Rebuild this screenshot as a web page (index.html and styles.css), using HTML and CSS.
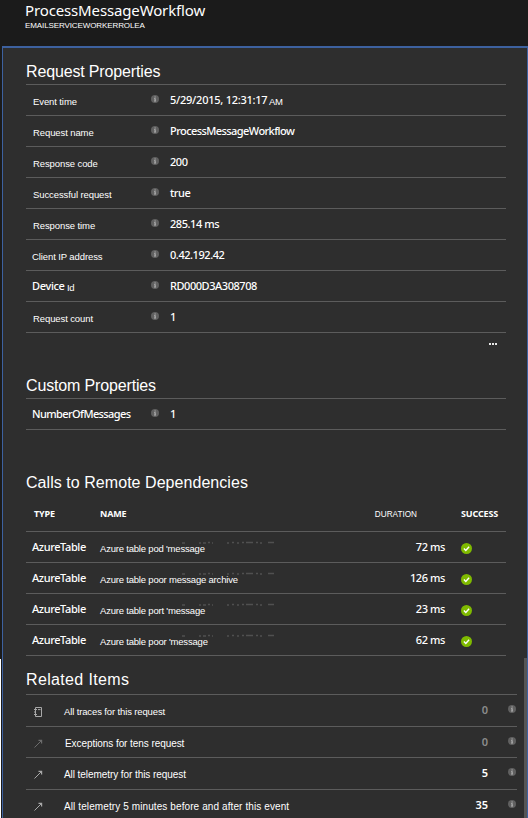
FILE: index.html
```html
<!DOCTYPE html>
<html lang="en">
<head>
<meta charset="utf-8">
<title>ProcessMessageWorkflow</title>
<link rel="stylesheet" href="styles.css">
</head>
<body>
<svg class="defs" width="0" height="0">
  <symbol id="info" viewBox="0 0 8 8"><circle cx="4" cy="4" r="4" fill="#606060"/><path d="M3.500 1.400h1.200v1.100H3.500zM3 3.300h1.700v2.500h.4v.8H3v-.8h.5V4H3z" fill="#b4b4b4"/></symbol>
  <symbol id="ok" viewBox="0 0 11 11"><circle cx="5.5" cy="5.5" r="5.5" fill="#7fba00"/><path d="M2.9 5.600l1.900 1.900 3.300-3.800" fill="none" stroke="#fff" stroke-width="1.4"/></symbol>
  <symbol id="arrow" viewBox="0 0 9 9"><path d="M.5 8.500L7 2" fill="none" stroke="currentColor"/><path d="M4.500.8h3.700v3.700H7V2H4.500z" fill="currentColor"/></symbol>
  <symbol id="book" viewBox="0 0 9 10"><path d="M1.500.5h6v9h-6zM0 2.500h3M0 5h2M0 7.500h3M4 2.600h2.500" fill="none" stroke="currentColor"/></symbol>
  <symbol id="smudge" viewBox="0 0 96 3"><path d="M2 2h3M19 2h2M23 2h3M28 1.500h2M32 2h1M47 2h2M52 1.500h2M57 2h2M62 1.500h2M66 1.500h7M76 1.500h2M80 2h2M88 1.500h6" stroke="#505050" stroke-width="1.500"/></symbol>
</svg>
<header class="header">
  <h1 class="title">ProcessMessageWorkflow</h1>
  <div class="subtitle">EMAILSERVICEWORKERROLEA</div>
</header>
<div class="body">
<div class="edge"></div>
<main class="blade">
  <section class="section">
    <h2 class="heading h-request">Request Properties</h2>
    <div class="row"><span class="label">Event time</span><svg class="info"><use href="#info"/></svg><span class="value date">5/29/2015, 12:31:17 <small class="am">AM</small></span></div>
    <div class="row"><span class="label">Request name</span><svg class="info"><use href="#info"/></svg><span class="value workflow">ProcessMessageWorkflow</span></div>
    <div class="row"><span class="label">Response code</span><svg class="info"><use href="#info"/></svg><span class="value">200</span></div>
    <div class="row"><span class="label">Successful request</span><svg class="info"><use href="#info"/></svg><span class="value">true</span></div>
    <div class="row"><span class="label">Response time</span><svg class="info"><use href="#info"/></svg><span class="value">285.14 ms</span></div>
    <div class="row"><span class="label ip">Client IP address</span><svg class="info"><use href="#info"/></svg><span class="value">0.42.192.42</span></div>
    <div class="row"><span class="label strong">Device <small class="id">Id</small></span><svg class="info"><use href="#info"/></svg><span class="value">RD000D3A308708</span></div>
    <div class="row"><span class="label">Request count</span><svg class="info"><use href="#info"/></svg><span class="value">1</span></div>
    <div class="more"><i></i><i></i><i></i></div>
  </section>
  <section class="section custom">
    <h2 class="heading h-custom">Custom Properties</h2>
    <div class="row"><span class="label strong messages">NumberOfMessages</span><svg class="info"><use href="#info"/></svg><span class="value">1</span></div>
  </section>
  <section class="section calls">
    <h2 class="heading h-calls">Calls to Remote Dependencies</h2>
    <div class="dep dep-head"><span class="type">TYPE</span><span class="name">NAME</span><span class="duration">DURATION</span><span class="success">SUCCESS</span></div>
    <div class="dep"><span class="type">AzureTable</span><span class="name">Azure table pod 'message<svg class="smudge"><use href="#smudge"/></svg></span><span class="duration">72 ms</span><svg class="ok"><use href="#ok"/></svg></div>
    <div class="dep"><span class="type">AzureTable</span><span class="name archive">Azure table poor message archive<svg class="smudge"><use href="#smudge"/></svg></span><span class="duration">126 ms</span><svg class="ok"><use href="#ok"/></svg></div>
    <div class="dep"><span class="type">AzureTable</span><span class="name">Azure table port 'message<svg class="smudge"><use href="#smudge"/></svg></span><span class="duration">23 ms</span><svg class="ok"><use href="#ok"/></svg></div>
    <div class="dep"><span class="type">AzureTable</span><span class="name">Azure table poor 'message<svg class="smudge"><use href="#smudge"/></svg></span><span class="duration">62 ms</span><svg class="ok"><use href="#ok"/></svg></div>
  </section>
  <section class="related">
    <h2 class="heading h-related">Related Items</h2>
    <div class="item"><svg class="glyph book"><use href="#book"/></svg><span class="text traces">All traces for this request</span><span class="count none">0</span><svg class="info"><use href="#info"/></svg></div>
    <div class="item"><svg class="glyph dim"><use href="#arrow"/></svg><span class="text exceptions">Exceptions for tens request</span><span class="count none">0</span><svg class="info"><use href="#info"/></svg></div>
    <div class="item"><svg class="glyph"><use href="#arrow"/></svg><span class="text">All telemetry for this request</span><span class="count">5</span><svg class="info"><use href="#info"/></svg></div>
    <div class="item"><svg class="glyph"><use href="#arrow"/></svg><span class="text around">All telemetry 5 minutes before and after this event</span><span class="count">35</span><svg class="info"><use href="#info"/></svg></div>
  </section>
  <div class="scrollbar"></div>
</main>
</div>
</body>
</html>
```
FILE: styles.css
```css
* { box-sizing: border-box; }
body {
  margin: 0;
  width: 528px;
  height: 818px;
  overflow: hidden;
  background: #1b1b1b;
  color: #fff;
  font-family: "Liberation Sans", sans-serif;
}
.defs { display: block; }
.header { height: 46px; padding: 0 25px; }
.title {
  margin: 0;
  font: 400 15px/20px "Noto Sans", sans-serif;
  letter-spacing: -0.14px;
  white-space: nowrap;
}
.subtitle { margin-top: 1px; font-size: 8px; line-height: 10px; letter-spacing: -0.1px; }
.body { display: flex; height: 772px; }
.edge {
  width: 2px;
  background: linear-gradient(90deg, #fff 1px, #1b1b1b 1px) 0 613px no-repeat;
}
.blade {
  position: relative;
  flex: 1;
  background: #2e2e2e;
  border: 1px solid #3d619f;
  border-top-width: 2px;
  border-bottom: 0;
  overflow: hidden;
}
.section { width: 480px; margin-left: 23px; }
.heading {
  margin: 0;
  height: 37px;
  padding-top: 14px;
  border-bottom: 1px solid #5c5c5c;
  font-size: 16px;
  font-weight: 400;
  line-height: 20px;
  white-space: nowrap;
}
.h-request { letter-spacing: -0.15px; }
.h-custom { letter-spacing: -0.15px; }
.h-calls { letter-spacing: 0.05px; border: 0; }
.row {
  display: grid;
  grid-template-columns: 118px 19px 1fr;
  height: 31px;
  padding-left: 7px;
  border-bottom: 1px solid #5c5c5c;
  white-space: nowrap;
}
.label { padding-top: 11px; font-size: 9.5px; line-height: 12px; letter-spacing: -0.1px; }
.label.ip { margin-left: -1px; }
.label.strong { padding-top: 7px; margin-left: -1px; font: 500 11px/16px "Noto Sans", sans-serif; letter-spacing: -0.35px; }
.label.messages { letter-spacing: -0.6px; }
.info { width: 8px; height: 8px; margin-top: 10px; }
.value { padding-top: 7px; font: 500 11px/16px "Noto Sans", sans-serif; letter-spacing: -0.45px; }
.value.date { letter-spacing: -0.25px; }
.value.workflow { letter-spacing: -0.57px; }
.am, .id { position: relative; top: 1px; font: 400 9.5px/12px "Liberation Sans", sans-serif; }
.am { left: -1px; }
.more { display: flex; justify-content: flex-end; gap: 1px; padding: 10px 9px 0 0; height: 33px; }
.more i { width: 2px; height: 2px; background: #e8e8e8; }
.custom { height: 100px; }
.custom .heading { height: 33px; padding-top: 10px; }
.calls .heading { height: 35px; padding-top: 7px; }
.dep {
  display: grid;
  grid-template-columns: 68px 240px 105px 1fr;
  height: 31px;
  padding-left: 6px;
  border-bottom: 1px solid #5c5c5c;
  white-space: nowrap;
}
.type, .duration { padding-top: 7px; font: 500 11px/16px "Noto Sans", sans-serif; letter-spacing: -0.4px; }
.duration { text-align: right; }
.name { position: relative; padding-top: 11px; font-size: 9.5px; line-height: 12px; letter-spacing: -0.2px; }
.name.archive { letter-spacing: -0.2px; }
.smudge { position: absolute; left: 80px; top: 9px; width: 96px; height: 3px; }
.ok { width: 11px; height: 11px; margin: 11px 0 0 16px; }
.dep-head .type, .dep-head .name, .dep-head .success { padding-top: 5px; font: 700 9px/16px "Noto Sans", sans-serif; letter-spacing: -0.15px; }
.dep-head .type { padding-left: 2px; }
.dep-head .success { padding-left: 16px; }
.dep-head .duration { padding: 6px 28px 0 0; font: 400 8.2px/16px "Liberation Sans", sans-serif; letter-spacing: 0; }
.related { width: 491px; margin-left: 23px; }
.related .heading { height: 39px; padding-top: 14px; letter-spacing: 0.35px; }
.item {
  display: grid;
  grid-template-columns: 38px 1fr 60px 29px;
  height: 31.6px;
  border-bottom: 1px solid #5c5c5c;
  white-space: nowrap;
}
.glyph { width: 9px; height: 9px; margin: 12px 0 0 8px; color: #a8a8a8; }
.glyph.book { height: 10px; }
.glyph.dim { color: #6c6c6c; }
.text { padding-top: 11px; font-size: 10px; line-height: 12px; letter-spacing: -0.07px; }
.text.traces { font-size: 9.5px; letter-spacing: -0.13px; }
.text.exceptions { padding-left: 1px; }
.text.around { letter-spacing: 0.1px; }
.count { padding-top: 7px; text-align: right; font: 600 11px/16px "Noto Sans", sans-serif; }
.count.none { color: #8c8c8c; }
.item .info { margin: 10px 0 0 20px; }
.scrollbar { position: absolute; right: -1px; top: 610px; width: 4px; bottom: 0; background: #555; }
```
